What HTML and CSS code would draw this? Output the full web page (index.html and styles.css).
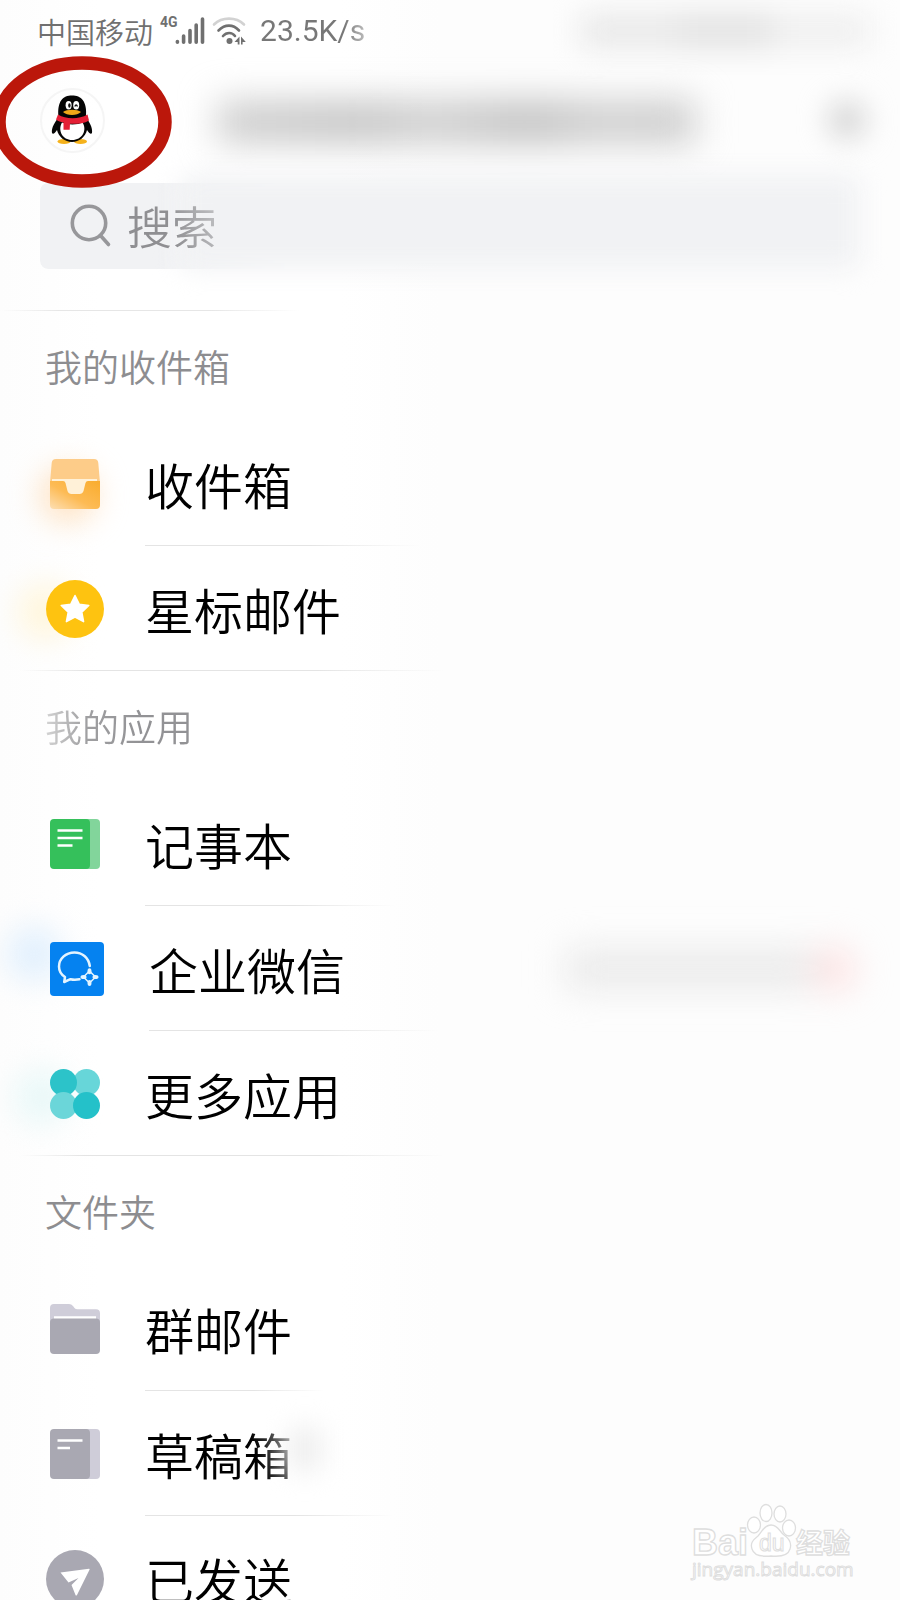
FILE: index.html
```html
<!DOCTYPE html>
<html lang="zh-CN">
<head>
<meta charset="utf-8">
<meta name="viewport" content="width=device-width, initial-scale=1">
<title>邮箱</title>
<link rel="stylesheet" href="styles.css">
</head>
<body>
<div class="screen">
  <div class="status">
    <span class="carrier">中国移动</span>
    <span class="net">4G</span>
    <svg class="signal" width="30" height="30" viewBox="0 0 30 30" aria-hidden="true">
      <g stroke="#707070" stroke-width="3.6" stroke-linecap="round">
        <path d="M2.4 25.600v.6M8.600 20v6.200M15 14.600v11.600M21.200 9v17.200M27.500 3v23.200"/>
      </g>
    </svg>
    <svg class="wifi" width="34" height="30" viewBox="0 0 34 30" aria-hidden="true">
      <g fill="none" stroke-width="2.600" stroke-linecap="round">
        <path stroke="#d2d2d2" d="M2 8.500C10 .7 24 .7 32 8.500"/>
        <path stroke="#707070" d="M6.500 14.500C13 8 21 8 27 14.500"/>
        <path stroke="#707070" d="M11 20C14.500 16 20 16 23 20"/>
      </g>
      <circle cx="17.500" cy="25" r="3" fill="#707070"/>
      <path fill="#707070" d="M27.500 20.500v8h-1.800v-2.500h-3.200zM29 20.500v8h1.600v-2.500h3.200z"/>
    </svg>
    <span class="speed">23.5K/s</span>
    <span class="status-haze" aria-hidden="true"><i></i><i></i><i></i></span>
  </div>

  <header class="header">
    <a class="avatar" href="#account" aria-label="QQ">
      <svg width="64" height="64" viewBox="0 0 64 64" aria-hidden="true">
        <ellipse cx="24" cy="53.500" rx="6.500" ry="2.500" fill="#f5b21c"/>
        <ellipse cx="40.500" cy="53.500" rx="6.500" ry="2.500" fill="#f5b21c"/>
        <path fill="#050505" d="M18.500 29C17 13 23 7.500 32 7.500S47.500 13 46 29c3 5 7 10.500 6 16-1 2-3 0-5-3-1.500 7-8 12-15 12S18.500 49 17 42c-2 3-4 5-5 3-1-5.500 3.500-11 6.500-16z"/>
        <path fill="#fff" d="M22 34.500c5 2.500 16 2.500 20.500 0 5 8-.5 17.500-10.300 17.500S17.500 42.500 22 34.500z"/>
        <ellipse cx="28.600" cy="17.300" rx="3" ry="4.200" fill="#fff"/>
        <ellipse cx="36.200" cy="17.300" rx="3" ry="4.200" fill="#fff"/>
        <ellipse cx="29.400" cy="17.500" rx="1.200" ry="2.200" fill="#111"/>
        <path d="M34.800 18.500q1.300-3 2.700 0" fill="none" stroke="#111" stroke-width="1.300"/>
        <path fill="#f0a818" d="M23 24c4-3 14-3 18 0-4 4-14 4-18 0z"/>
        <path fill="#e41f35" d="M18 26.500c8 5 21 5 29.500 0l1.500 6c-5 3-11 3.500-19 3.300l-.3 6h-6.200v-7.300c-3-.5-5-1.200-7.500-3z"/>
      </svg>
      <svg class="ring" width="182" height="134" viewBox="0 0 182 134" aria-hidden="true">
        <ellipse cx="91" cy="67" rx="83" ry="59" fill="none" stroke="#bb170b" stroke-width="13.500"/>
      </svg>
    </a>
    <span class="title-haze" aria-hidden="true"></span>
    <button class="menu" type="button" aria-label="添加"></button>
  </header>

  <form class="search" role="search">
    <svg width="42" height="44" viewBox="0 0 42 44" aria-hidden="true">
      <g fill="none" stroke="#97979a" stroke-width="3.600" stroke-linecap="round">
        <circle cx="19" cy="19" r="16.700"/><path d="M30.500 31.500L38.500 40.500"/>
      </g>
    </svg>
    <input class="search-input" type="search" placeholder="搜索" aria-label="搜索">
  </form>

  <main>
    <section class="group">
      <h2 class="group-title">我的收件箱</h2>
      <a class="row" href="#inbox">
        <span class="icon glow-orange">
          <svg width="50" height="50" viewBox="0 0 50 50" aria-hidden="true">
            <defs>
              <linearGradient id="tray" x1="0" y1="1" x2="1" y2="0"><stop offset="0" stop-color="#fddfb3"/><stop offset=".45" stop-color="#fdbb55"/><stop offset="1" stop-color="#f9ac2d"/></linearGradient>
            </defs>
            <path fill="#fdcc89" d="M6 0h38q4 0 4.300 4L50 24H0L1.700 4Q2 0 6 0z"/>
            <path fill="#fff1d8" d="M2 20h45v8H36l-2 5q-1 2-4 2H21q-3 0-4-2l-2-6H2z"/>
            <path fill="url(#tray)" d="M0 22h13q2 0 2.500 2l2 8q1 3 4 3h8q3 0 4-3l2-8q.5-2 2.500-2h12v24q0 4-4 4H4q-4 0-4-4z"/>
          </svg>
        </span>
        <span class="label">收件箱</span>
      </a>
      <a class="row" href="#starred">
        <span class="icon glow-yellow">
          <svg width="58" height="58" viewBox="0 0 58 58" aria-hidden="true">
            <circle cx="29" cy="29" r="29" fill="#fec310"/>
            <path fill="#fff" stroke="#fff" stroke-width="1.500" stroke-linejoin="round" d="M29 15.500l4.200 8.700 9.600 1.200-7 6.700 1.800 9.600-8.600-4.700-8.600 4.700 1.800-9.600-7-6.700 9.600-1.200z"/>
          </svg>
        </span>
        <span class="label">星标邮件</span>
      </a>
    </section>

    <section class="group">
      <h2 class="group-title faded">我的应用</h2>
      <a class="row short" href="#notes">
        <span class="icon">
          <svg width="50" height="50" viewBox="0 0 50 50" aria-hidden="true">
            <rect x="20" width="30" height="50" rx="4" fill="#82d59b"/>
            <rect width="40" height="50" rx="4" fill="#35c05b"/>
            <path stroke="#fff" stroke-width="2.600" d="M7.500 11.500h25M7.500 19h25M7.500 26.500h15"/>
          </svg>
        </span>
        <span class="label">记事本</span>
      </a>
      <a class="row wide" href="#wework">
        <span class="icon glow-blue">
          <svg width="54" height="54" viewBox="0 0 54 54" aria-hidden="true">
            <rect width="54" height="54" rx="4" fill="#0582f0"/>
            <path fill="none" stroke="#e4f4ff" stroke-width="2.500" stroke-linecap="round" stroke-linejoin="round" d="M39.800 24C38.500 15.500 32 10.500 24.500 10.500 15.500 10.500 9 17 9 24.500c0 4.500 2.300 8.200 6 10.500l-.8 5 6.300-2.800c3.500.9 5.500.7 9 .1"/>
            <path fill="none" stroke="#e4f4ff" stroke-width="1.500" d="M39.500 29l6 6-6 6-6-6z"/>
            <g fill="#e4f4ff"><ellipse cx="39.500" cy="29.300" rx="2" ry="3"/><ellipse cx="45.500" cy="35" rx="3" ry="2"/><ellipse cx="39.500" cy="41" rx="2" ry="3"/><ellipse cx="33.500" cy="35" rx="3" ry="2"/></g>
          </svg>
        </span>
        <span class="label">企业微信</span>
        <span class="row-haze" aria-hidden="true"><i></i><b></b></span>
      </a>
      <a class="row" href="#more">
        <span class="icon glow-teal">
          <svg width="50" height="50" viewBox="0 0 50 50" aria-hidden="true">
            <circle cx="36.500" cy="13.500" r="13.500" fill="#67d6d9"/>
            <circle cx="13.500" cy="13.500" r="13.500" fill="#2cc3c9"/>
            <circle cx="13.500" cy="36.500" r="13.500" fill="#6bd6d9"/>
            <circle cx="36.500" cy="36.500" r="13.500" fill="#24c1c9"/>
          </svg>
        </span>
        <span class="label">更多应用</span>
      </a>
    </section>

    <section class="group">
      <h2 class="group-title">文件夹</h2>
      <a class="row shorter" href="#group-mail">
        <span class="icon">
          <svg width="50" height="50" viewBox="0 0 50 50" aria-hidden="true">
            <path fill="#cfcdd9" d="M4 0h15q2.500 0 4 2l1.500 2q1 1.300 3 1.300H46q4 0 4 4V30H0V4q0-4 4-4z"/>
            <path fill="#fff" d="M4 12.300h42v4H4z"/>
            <rect y="14.500" width="50" height="35.500" rx="4" fill="#a9a8b2"/>
          </svg>
        </span>
        <span class="label">群邮件</span>
      </a>
      <a class="row short" href="#drafts">
        <span class="icon">
          <svg width="50" height="50" viewBox="0 0 50 50" aria-hidden="true">
            <rect x="20" width="30" height="50" rx="4" fill="#cfcdd9"/>
            <rect width="40" height="50" rx="4" fill="#a9a8b2"/>
            <path stroke="#fff" stroke-width="2.600" d="M7.500 11.500h25M7.500 19h12.500"/>
          </svg>
        </span>
        <span class="label smudge">草稿箱</span>
      </a>
      <a class="row" href="#sent">
        <span class="icon">
          <svg width="58" height="58" viewBox="0 0 58 58" aria-hidden="true">
            <circle cx="29" cy="29" r="29" fill="#a9a8b2"/>
            <path fill="#fff" d="M14.500 22.500L43 18.700q1 0 .5 1L31 45q-1 1-1.500 0L25.500 35l7-7-10 4.500z"/>
          </svg>
        </span>
        <span class="label">已发送</span>
      </a>
    </section>
  </main>

  <svg class="watermark" width="170" height="84" viewBox="0 0 170 84" aria-hidden="true">
    <g fill="#fff" stroke="#dedede" stroke-width="1.300">
      <text class="wm-latin" x="3" y="53">Bai</text>
      <ellipse cx="65" cy="23" rx="6.500" ry="8"/>
      <ellipse cx="77" cy="11" rx="6" ry="8.500"/>
      <ellipse cx="91" cy="12" rx="6" ry="8"/>
      <ellipse cx="100" cy="26" rx="6.500" ry="8"/>
      <path d="M82 23c7 0 8 6 13 10 5 3.500 8 8 6 14-2 7-9 8-19 7-10 1-17 0-19-7-2-6 1-9 6-13 4-4 6-11 13-11z"/>
      <text class="wm-du" x="70" y="49">du</text>
      <text class="wm-cn" x="107" y="51">经验</text>
    </g>
    <text class="wm-url" x="3" y="74">jingyan.baidu.com</text>
  </svg>
</div>
</body>
</html>
```
FILE: styles.css
```css
* { box-sizing: border-box; }

body {
  margin: 0;
  background: #fdfdfd;
  font-family: "Noto Sans CJK SC", sans-serif;
}

.screen {
  position: relative;
  height: 100vh;
  overflow: hidden;
  background: linear-gradient(90deg, #fdfdfd, #fff 100px, #fff 340px, #fdfdfd 440px);
}

/* status bar */
.status {
  display: flex;
  align-items: center;
  height: 62px;
  padding: 0 30px 0 37px;
  color: #707070;
}
.carrier { font-size: 29px; font-weight: 350; line-height: 40px; }
.net {
  align-self: flex-start;
  margin: 14px 0 0 7px;
  width: 15px;
  font: 700 14px/16px Roboto, sans-serif;
  white-space: nowrap;
}
.wifi { margin-left: 7px; }
.speed {
  margin-left: 14px;
  font: 400 30px/40px Roboto, sans-serif;
  color: transparent;
  background: linear-gradient(90deg, #777 80%, #bbb);
  background-clip: text;
  -webkit-background-clip: text;
}
.status-haze {
  display: flex;
  flex: 1;
  margin-left: 215px;
  height: 34px;
  filter: blur(15px);
}
.status-haze i { flex: 1; background: #e8e8e8; }
.status-haze i:nth-child(2) { background: #e1e1e1; }
.status-haze i:nth-child(3) { background: #efefef; }

/* header */
.header {
  display: flex;
  align-items: center;
  height: 116px;
  padding: 0 33px 0 40px;
}
.avatar {
  position: relative;
  z-index: 2;
  width: 65px;
  height: 65px;
  border: 2px solid #f5f5f5;
  border-radius: 50%;
}
.avatar svg { display: block; margin: -2px; }
.avatar .ring { position: absolute; left: -51px; top: -35px; margin: 0; }
.title-haze {
  flex: 1;
  height: 42px;
  margin: 4px 132px 0 112px;
  background: linear-gradient(90deg, #cecece, #c3c3c3 30%, #cecece 45%, #bfbfbf 65%, #cecece 80%, #cacaca);
  filter: blur(18px);
}
.menu {
  width: 40px;
  height: 40px;
  padding: 0;
  border: 0;
  border-radius: 50%;
  background: #d8d8d8;
  filter: blur(14px);
}

/* search */
.search {
  position: relative;
  display: flex;
  align-items: center;
  height: 86px;
  margin: 5px 40px 41px;
  padding: 0 30px;
}
.search::before,
.search::after {
  content: "";
  position: absolute;
  inset: 0;
  border-radius: 8px;
  background: #f1f2f4;
}
.search::before {
  -webkit-mask-image: linear-gradient(90deg, #000 120px, transparent 260px);
  mask-image: linear-gradient(90deg, #000 120px, transparent 260px);
}
.search::after {
  inset: -8px 0 0 140px;
  filter: blur(13px);
}
.search svg, .search-input { position: relative; z-index: 1; }
.search-input {
  flex: 1;
  min-width: 0;
  height: 64px;
  margin-left: 15px;
  padding: 0;
  border: 0;
  outline: 0;
  background: transparent;
  font: 350 45px/64px "Noto Sans CJK SC", sans-serif;
  color: #8f8f92;
  -webkit-mask-image: linear-gradient(75deg, #000 50px, rgba(0, 0, 0, .4) 110px);
  mask-image: linear-gradient(75deg, #000 50px, rgba(0, 0, 0, .4) 110px);
}
.search-input::placeholder { color: #8f8f92; opacity: 1; }

/* groups */
.group { position: relative; }
.group:first-child::before {
  content: "";
  display: block;
  height: 1px;
  width: 300px;
  background: linear-gradient(90deg, transparent, #e6e6e6 20%, #e6e6e6 70%, transparent);
}
.group-title {
  margin: 0;
  height: 110px;
  padding-left: 45px;
  font-size: 37px;
  line-height: 111px;
  font-weight: 350;
  color: #8d8d90;
}
.faded {
  width: 240px;
  color: transparent;
  background: linear-gradient(90deg, #d4d4d4 45px, #a0a0a2 85px, #929295 140px);
  background-clip: text;
  -webkit-background-clip: text;
}
.row {
  position: relative;
  display: flex;
  align-items: center;
  height: 125px;
  padding: 0 30px 0 46px;
  color: #000;
  text-decoration: none;
}
.row::after {
  content: "";
  position: absolute;
  left: 145px;
  bottom: 0;
  width: 275px;
  height: 1px;
  background: linear-gradient(90deg, #e4e4e4 60%, transparent);
}
.short::after { width: 250px; }
.shorter::after { width: 180px; }
.wide::after { left: 149px; width: 290px; }
.row:last-child::after {
  left: 20px;
  width: 425px;
  background: linear-gradient(90deg, transparent, #e4e4e4 15%, #e4e4e4 70%, transparent);
}
.icon {
  position: relative;
  display: flex;
  justify-content: center;
  width: 58px;
  margin-right: 41px;
}
.wide .icon { width: 62px; }
.icon svg { position: relative; display: block; }
.icon::before {
  position: absolute;
  width: 56px;
  height: 56px;
  border-radius: 50%;
  filter: blur(15px);
}
.glow-orange::before { content: ""; left: -6px; top: 8px; background: #fee3c4; }
.glow-yellow::before { content: ""; left: -28px; top: 4px; background: #fff6dc; }
.glow-blue::before { content: ""; left: -40px; top: -16px; background: #e2f0fd; }
.glow-teal::before { content: ""; left: -32px; top: 0; background: #e9f8f8; }
.label {
  font-size: 49px;
  line-height: 70px;
  font-weight: 350;
}
.smudge {
  position: relative;
  color: transparent;
  background: linear-gradient(75deg, #000 115px, #888 165px);
  background-clip: text;
  -webkit-background-clip: text;
}
.smudge::after {
  content: "";
  position: absolute;
  right: -30px;
  top: 8px;
  width: 34px;
  height: 44px;
  background: #efefef;
  filter: blur(13px);
}
.row-haze {
  display: flex;
  align-items: center;
  flex: 1;
  margin-left: 220px;
  filter: blur(18px);
}
.row-haze i { flex: 1; height: 38px; background: #e9e9e9; }
.row-haze b { width: 40px; height: 44px; margin-right: 16px; background: #fddfdf; border-radius: 50%; }

/* watermark */
.watermark { position: absolute; right: 41px; bottom: 14px; }
.wm-latin { font: 700 36px "Liberation Sans", sans-serif; }
.wm-du { font: 400 23px "Liberation Sans", sans-serif; stroke-width: 1px; }
.wm-cn { font: 700 27px "Noto Sans CJK SC", sans-serif; }
.wm-url {
  font: 400 19px "Open Sans", sans-serif;
  fill: #fff;
  stroke: #dedede;
  stroke-width: 1px;
}
```
